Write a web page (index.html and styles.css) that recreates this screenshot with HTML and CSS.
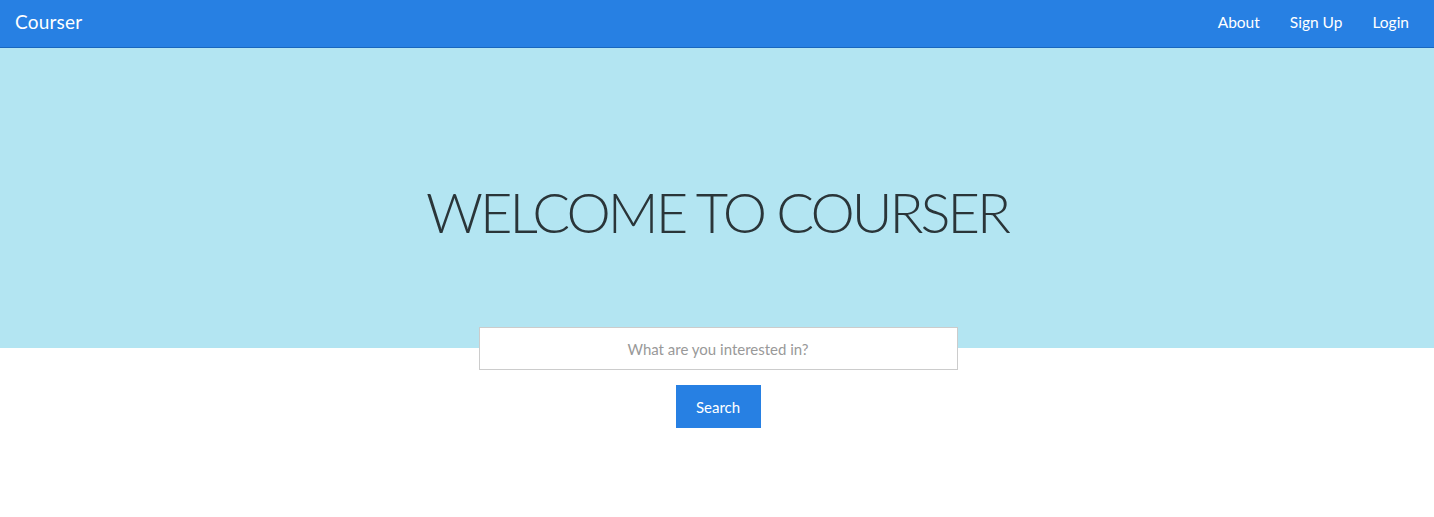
FILE: index.html
```html
<!DOCTYPE html>
<html>
<head>
<meta charset="utf-8">
<title>Courser</title>
<link rel="stylesheet" href="styles.css">
</head>
<body>
<nav class="navbar">
  <a class="brand" href="#">Courser</a>
  <ul class="nav-links">
    <li><a href="#">About</a></li>
    <li><a href="#">Sign Up</a></li>
    <li><a href="#">Login</a></li>
  </ul>
</nav>
<header class="hero">
  <h1 class="hero-title">WELCOME TO COURSER</h1>
</header>
<form class="search">
  <input class="search-input" type="text" placeholder="What are you interested in?">
  <button class="search-btn" type="button">Search</button>
</form>
</body>
</html>
```
FILE: styles.css
```css
* { box-sizing: border-box; }
html, body { margin: 0; padding: 0; background: #fff; }
body { font-family: Lato, "Open Sans", sans-serif; }

.navbar {
  height: 48px;
  background: #2780e3;
  border-bottom: 1px solid #1967be;
  display: flex;
  align-items: center;
  justify-content: space-between;
  padding: 0 10px 3px 15px;
}
.brand {
  color: #fff;
  text-decoration: none;
  font-size: 19px;
  letter-spacing: 0.2px;
  line-height: 44px;
}
.nav-links {
  list-style: none;
  margin: 0;
  padding: 0;
  display: flex;
}
.nav-links a {
  display: block;
  color: #fff;
  text-decoration: none;
  font-size: 15.5px;
  padding: 0 15px;
  line-height: 42px;
}

.hero {
  height: 300px;
  background: #b3e5f2;
  display: flex;
  align-items: center;
  justify-content: center;
  padding-top: 26px;
}
.hero-title {
  margin: 0;
  font-family: Lato, sans-serif;
  font-weight: 300;
  font-size: 56px;
  color: #2a3539;
  letter-spacing: -3px;
}

.search {
  margin-top: -21px;
  display: flex;
  flex-direction: column;
  align-items: center;
  gap: 15px;
}
.search-input {
  width: 479px;
  height: 43px;
  margin-left: 2px;
  border: 1px solid #cccccc;
  background: #fff;
  font-family: Lato, sans-serif;
  font-size: 15px;
  text-align: center;
  color: #333;
  padding: 0 12px;
  outline: none;
}
.search-input::placeholder { color: #999; }
.search-btn {
  width: 85px;
  height: 43px;
  margin-left: 2px;
  border: none;
  background: #2780e3;
  color: #fff;
  font-family: Lato, sans-serif;
  font-size: 15px;
  cursor: pointer;
}
```
